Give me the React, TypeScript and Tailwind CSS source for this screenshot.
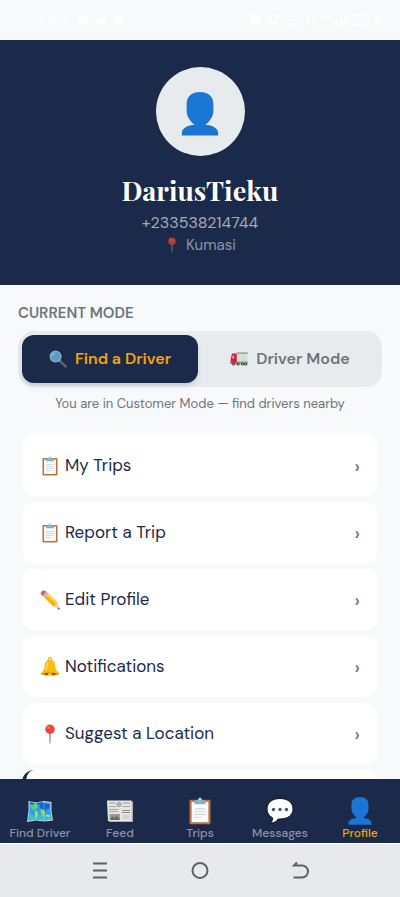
import type { ReactNode } from "react";

type IconProps = { className?: string };

function PersonIcon({ className }: IconProps) {
  return (
    <svg viewBox="0 0 40 46" className={className} aria-hidden="true">
      <path
        fill="#1b76d3"
        d="M20 0C10.500 0 6 5.500 6 12.500v7c0 6 4 11.500 8.500 14.800C7 34.800 1 38 1 43v2.500h38V43c0-5-6-8.200-13.500-8.700C30 31 34 25.500 34 19.500v-7C34 5.500 29.500 0 20 0z"
      />
    </svg>
  );
}

function PinIcon({ className }: IconProps) {
  return (
    <svg viewBox="0 0 20 20" className={className} aria-hidden="true">
      <path d="M9.200 8h1.600L10.500 19.500h-1z" fill="#6e9aae" />
      <circle cx="10" cy="5.200" r="4.700" fill="#f04434" />
      <circle cx="8.500" cy="3.600" r="1.300" fill="#ff8073" />
    </svg>
  );
}

function ClipboardIcon({ className }: IconProps) {
  return (
    <svg viewBox="0 0 20 20" className={className} aria-hidden="true">
      <rect x="2.500" y="2" width="15" height="17.500" rx="0.800" fill="#b9713f" />
      <rect x="4" y="3.500" width="12" height="14.500" fill="#fafafa" />
      <path d="M14.500 18L16 16.500V18z" fill="#c9d0d4" />
      <path
        d="M6 8.500h8M6 10.500h8M6 12.500h8M6 14.500h5"
        stroke="#cfd6da"
        strokeWidth="0.800"
      />
      <path d="M6 5.200V3.400c0-.7.6-1 1.400-1h1C8.500 1.200 9 .4 10 .4s1.500.8 1.600 2h1c.8 0 1.400.3 1.400 1v1.800z" fill="#82b4c9" />
      <circle cx="10" cy="1.800" r="0.600" fill="#eef5f8" />
    </svg>
  );
}

function PencilIcon({ className }: IconProps) {
  return (
    <svg viewBox="0 0 20 20" className={className} aria-hidden="true">
      <path d="M1.200 4.800C.2 3.200.8 1.600 2.200.9c1.500-.8 3-.3 4 .9L3 6.200z" fill="#ef5466" />
      <path d="M2.300 5.700l4.200-4.200 2 2-4.200 4.200z" fill="#a9bdc6" />
      <path d="M4.300 7.700l4.200-4.200 8.700 8.700 1 5-4.900-.8z" fill="#ffb300" />
      <path d="M6.800 5.200l1.700-1.700 8.700 8.700-.8 1.800z" fill="#ffd54f" />
      <path d="M13.300 16.400l1.600-.5.500-1.600 1.800-2.100 2.300 7.200z" fill="#f6d3a2" />
      <path d="M17.500 18.700l1.500-1.500.8 2.500z" fill="#37474f" />
    </svg>
  );
}

function BellIcon({ className }: IconProps) {
  return (
    <svg viewBox="0 0 20 20" className={className} aria-hidden="true">
      <circle cx="10" cy="2.400" r="1.700" fill="none" stroke="#f5b400" strokeWidth="1.200" />
      <path d="M10 2.800c-3.500 0-5 2.500-5.300 6C4.400 12.500 3.500 14 1 16v2h18v-2c-2.500-2-3.400-3.500-3.700-7.200-.3-3.500-1.800-6-5.300-6z" fill="#fbbd12" />
      <path d="M8.500 4.500c-1.700 1-2.200 3-2.200 5.500l-.6 4C8 12 7.500 7 8.500 4.500z" fill="#ffe37a" />
      <ellipse cx="10" cy="17" rx="8.500" ry="1.700" fill="#e59600" />
      <ellipse cx="10" cy="17" rx="5.800" ry="1.100" fill="#6d4c20" />
      <ellipse cx="10" cy="17.600" rx="2.200" ry="1.500" fill="#ffca28" />
    </svg>
  );
}

function SearchIcon({ className }: IconProps) {
  return (
    <svg viewBox="0 0 20 20" className={className} aria-hidden="true">
      <path d="M11.500 11.500l2.500 2.500" stroke="#90a4ae" strokeWidth="1.800" />
      <path d="M13.500 13.500l5 4.700" stroke="#5f5d60" strokeWidth="3" strokeLinecap="round" />
      <circle cx="7.300" cy="7.300" r="6" fill="#5b9bc9" stroke="#8fb0c2" strokeWidth="1.400" />
      <path d="M3.500 7C3.500 4.500 5.500 3 8 3.300 6 4 4.500 5 3.500 7z" fill="#c3e2f3" />
    </svg>
  );
}

function TruckIcon({ className }: IconProps) {
  return (
    <svg viewBox="0 0 20 16" className={className} aria-hidden="true">
      <rect x="7.500" y="1" width="12.200" height="11" fill="#d9dfe0" />
      <path d="M7.500 1.500h12.200M7.500 11.500h12.200" stroke="#78a35a" strokeWidth="1.200" />
      <path d="M10 2v9M13 2v9M16 2v9" stroke="#c2cacc" strokeWidth="0.500" />
      <path d="M1.800 3.500C2 2.500 2.500 2 3.500 2h4v11H.6V9z" fill="#e21b2f" />
      <path d="M2.300 7.500l.8-3.500h1.700v3.500z" fill="#a8cbd8" />
      <path d="M5.500 4v8" stroke="#ae1425" strokeWidth="0.600" />
      <path d="M.3 12h19v1.500H.3z" fill="#80878a" />
      <g fill="#3c4043">
        <circle cx="4" cy="13.700" r="1.600" />
        <circle cx="9" cy="13.700" r="1.600" />
        <circle cx="14" cy="13.700" r="1.600" />
        <circle cx="17.500" cy="13.700" r="1.600" />
      </g>
      <g fill="#d0d3d4">
        <circle cx="4" cy="13.700" r="0.600" />
        <circle cx="9" cy="13.700" r="0.600" />
        <circle cx="14" cy="13.700" r="0.600" />
        <circle cx="17.500" cy="13.700" r="0.600" />
      </g>
    </svg>
  );
}

function MapIcon({ className }: IconProps) {
  return (
    <svg viewBox="0 0 28 28" className={className} aria-hidden="true">
      <path d="M2.500 4l7.500 1.500L18 4l7.500 1-0 9L27 23.500 18.500 24.500 10 23.500 1 25l1.500-11z" fill="#c8d8df" />
      <path d="M3.500 5.200l6.500 1.300L18 5.200l6.500.8v8l1.300 8.500-7.300.9-8.500-1L2.300 23.500l1.200-9.500z" fill="#2d9df0" />
      <path d="M3.200 17l7 2 8-1.500 7 1 .6 4-7.300.9-8.500-1L2.300 23.500z" fill="#35bfd8" />
      <path d="M5 8l4-1 3 1 1 2-3 1-1.500 3L6 12l-1.500-2z" fill="#52d264" />
      <path d="M14 7.500l4-1.300 5.500 1v4l-3 1-1 2.500-2-2.500-2.500-.5-2-2z" fill="#1764cf" />
      <path d="M9 14l3 1 .5 2.500L10.500 21 9 18z" fill="#a5d832" />
      <path d="M14.500 12.500l3.500.5 1 2.500-2 4-2-3z" fill="#96d94b" />
      <path d="M20.500 17.500l3 .5v2l-3-.5z" fill="#efd54c" />
      <path d="M4 6l4 .8M11 6.800L17 6" stroke="#1559bd" strokeWidth="1.500" />
      <path d="M10 6l-.3 17M18 5l.4 19" stroke="#ffffff" strokeOpacity="0.250" />
    </svg>
  );
}

function NewspaperIcon({ className }: IconProps) {
  return (
    <svg viewBox="0 0 28 28" className={className} aria-hidden="true">
      <path d="M2 4.500h25V25H3.500L2 23z" fill="#b4b2ae" />
      <path d="M1 3.500h24.500V24H2z" fill="#e6e5e1" />
      <path d="M3 6h6.500M16.500 6H24" stroke="#9b9995" strokeWidth="1.200" />
      <circle cx="13" cy="7.500" r="2" fill="#bcbab6" stroke="#8d8b87" strokeWidth="0.800" />
      <path d="M3 9.500h7M16 9.500h8M3 12.500h9.500M3 14.500h9.500" stroke="#aaa8a4" />
      <rect x="3.500" y="17" width="10.500" height="6" fill="#9c9a96" />
      <path d="M4 23l2.500-4 2 2.500 2-3 3.500 4.500z" fill="#696764" />
      <path d="M16 13.500h8M16 15.500h8" stroke="#8f8d89" strokeWidth="1.200" />
      <path d="M16.500 19h7M16.500 21h7" stroke="#c3c1bd" />
    </svg>
  );
}

function ChatIcon({ className }: IconProps) {
  return (
    <svg viewBox="0 0 28 28" className={className} aria-hidden="true">
      <path
        d="M14 1.500C6 1.500 1 6 1 12c0 4 2 7 5.500 8.800.2 2-.5 4-2 5.500 3.500-.3 6.200-1.800 7.700-4.300H14c8 0 13-4 13-10S22 1.500 14 1.500z"
        fill="#ffffff"
        stroke="#0b1020"
        strokeWidth="1"
      />
      <g fill="#455a68">
        <circle cx="7.500" cy="12.500" r="1.700" />
        <circle cx="14" cy="12.500" r="1.700" />
        <circle cx="20.500" cy="12.500" r="1.700" />
      </g>
    </svg>
  );
}

function StatusBar() {
  return (
    <div className="flex h-10 shrink-0 items-center justify-between px-4 text-white">
      <div className="flex items-center gap-2">
        <span className="text-sm">2:26 AM</span>
        <svg viewBox="0 0 50 14" className="h-3.5 w-12" fill="currentColor" aria-hidden="true">
          <rect x="2" y="2" width="9" height="10" rx="3" />
          <path d="M18 7l13-5-3 11-4-3-2 2v-3z" />
          <rect x="37" y="2" width="11" height="9" rx="2" />
        </svg>
      </div>
      <svg viewBox="0 0 136 16" className="h-4 w-34" fill="currentColor" aria-hidden="true">
        <circle cx="7" cy="8" r="5" />
        <path d="M2 4l3-3M12 4L9 1" stroke="currentColor" strokeWidth="1.500" />
        <path d="M20 3h4v4h-4zM27 3h4v4h-4zM20 9h11v3H20z" />
        <path d="M38 6q6-5 12 0M40 9q4-3 8 0" fill="none" stroke="currentColor" strokeWidth="1.500" />
        <circle cx="44" cy="12" r="1.500" />
        <path d="M58 4h4v3h-4zM59 9h2v4h-2zM65 6h2v7h-2z" />
        <path d="M76 3h7v3h-7zM84 11h2v3h-2zM88 8h2v6h-2zM92 5h2v9h-2zM96 2h2v12h-2z" />
        <rect x="100" y="3" width="21" height="10" rx="3" fill="none" stroke="currentColor" />
        <path d="M131 2l-5 7h3l-1 5 6-7h-4z" />
      </svg>
    </div>
  );
}

const menu: { label: string; icon: ReactNode }[] = [
  { label: "My Trips", icon: <ClipboardIcon className="size-5" /> },
  { label: "Report a Trip", icon: <ClipboardIcon className="size-5" /> },
  { label: "Edit Profile", icon: <PencilIcon className="size-5" /> },
  { label: "Notifications", icon: <BellIcon className="size-5" /> },
  { label: "Suggest a Location", icon: <PinIcon className="size-5" /> },
];

const tabs: { label: string; icon: ReactNode; active?: boolean }[] = [
  { label: "Find Driver", icon: <MapIcon className="size-7" /> },
  { label: "Feed", icon: <NewspaperIcon className="size-7" /> },
  { label: "Trips", icon: <ClipboardIcon className="size-7" /> },
  { label: "Messages", icon: <ChatIcon className="size-7" /> },
  { label: "Profile", icon: <PersonIcon className="size-7" />, active: true },
];

export default function App() {
  return (
    <div className="flex h-screen flex-col overflow-hidden bg-[#f8f9fb] font-['DM_Sans',Inter,sans-serif] text-[#1b2a4a]">
      <StatusBar />

      <header className="flex shrink-0 flex-col items-center bg-[#1b2a4a] pt-[27px] pb-[29px]">
        <div className="flex size-[89px] items-center justify-center rounded-full bg-[#e8ebee]">
          <PersonIcon className="mt-1 h-11 w-10" />
        </div>
        <h1 className="mt-4 font-['Playfair_Display','Liberation_Serif',serif] text-[27px] leading-9 font-bold text-white">
          DariusTieku
        </h1>
        <p className="mt-1 text-base leading-[22px] text-[#a4aab7]">+233538214744</p>
        <p className="flex items-center gap-1.5 text-[15px] leading-[22px] text-[#8d95a5]">
          <PinIcon className="size-4 opacity-70" />
          Kumasi
        </p>
      </header>

      <main className="min-h-0 flex-1 overflow-hidden px-[18px] pt-[18px]">
        <h2 className="text-[15px] leading-5 font-semibold text-[#6c757d]">CURRENT MODE</h2>
        <div className="mt-2 flex gap-1 rounded-2xl bg-[#e8ebee] p-1">
          <button className="flex h-12 flex-1 items-center justify-center gap-2 rounded-xl bg-[#1b2a4a] text-base font-semibold text-[#f5a30a] shadow-md">
            <SearchIcon className="size-[18px]" />
            Find a Driver
          </button>
          <button className="flex h-12 flex-1 items-center justify-center gap-2 rounded-xl text-base font-semibold text-[#6c757d]">
            <TruckIcon className="h-4 w-[18px]" />
            Driver Mode
          </button>
        </div>
        <p className="mt-1.5 text-center text-[13px] leading-[22px] text-[#6c757d]">
          You are in Customer Mode — find drivers nearby
        </p>

        <nav className="mx-1 mt-5 flex flex-col gap-1.5">
          {menu.map((item) => (
            <button
              key={item.label}
              className="flex h-[61px] shrink-0 items-center gap-[5px] rounded-xl bg-white px-[18px] text-[17px]"
            >
              {item.icon}
              {item.label}
              <span className="ml-auto text-xl leading-6 font-medium text-[#6c757d]">›</span>
            </button>
          ))}
          <div className="h-[61px] shrink-0 rounded-xl border-l-4 border-[#1b2a4a] bg-white" />
        </nav>
      </main>

      <nav className="grid h-16 shrink-0 grid-cols-5 bg-[#1b2a4a] pt-[18px]">
        {tabs.map((tab) => (
          <button
            key={tab.label}
            className={
              tab.active
                ? "flex flex-col items-center text-xs font-medium text-[#f5a30a]"
                : "flex flex-col items-center text-xs font-medium text-[#8d95a5]"
            }
          >
            {tab.icon}
            {tab.label}
          </button>
        ))}
      </nav>

      <div className="flex h-[54px] shrink-0 items-center justify-center gap-20 border-t border-white bg-[#e8e9ed] text-[#606165]">
        <button aria-label="Recent apps">
          <svg viewBox="0 0 20 20" className="size-5" fill="none" stroke="currentColor" strokeWidth="2" aria-hidden="true">
            <path d="M3 2.500h14M3 9.500h14M3 16.500h14" />
          </svg>
        </button>
        <button aria-label="Home">
          <svg viewBox="0 0 20 20" className="size-5" fill="none" stroke="currentColor" strokeWidth="2" aria-hidden="true">
            <circle cx="10" cy="9.500" r="7.500" />
          </svg>
        </button>
        <button aria-label="Back">
          <svg viewBox="0 0 20 20" className="size-5" fill="none" stroke="currentColor" strokeWidth="2" aria-hidden="true">
            <path d="M7 1.500L4 4.500h8a5.500 5.500 0 0 1 0 12H3.500" />
          </svg>
        </button>
      </div>
    </div>
  );
}
